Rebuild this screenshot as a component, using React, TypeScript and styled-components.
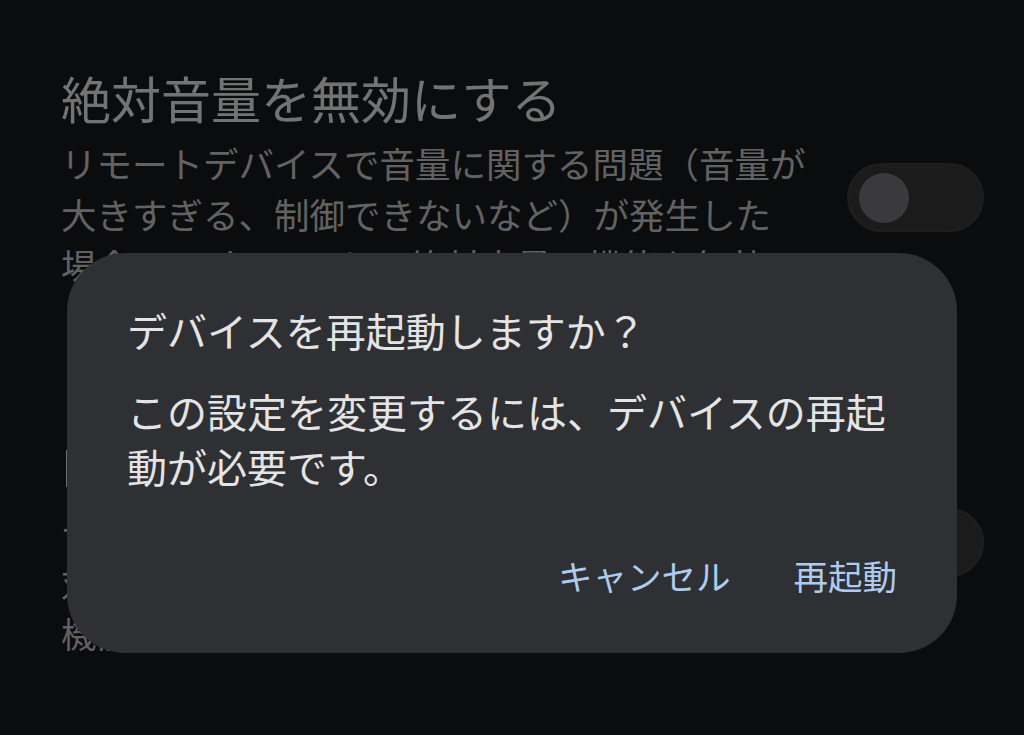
import React from "react"
import styled, { createGlobalStyle } from "styled-components"

const GlobalStyle = createGlobalStyle`
  html, body {
    margin: 0;
    padding: 0;
    background: #17181a;
  }
  body {
    font-family: "Noto Sans CJK JP", "Noto Sans", sans-serif;
    overflow: hidden;
  }
`

const Screen = styled.div`
  position: relative;
  width: 1024px;
  height: 735px;
  overflow: hidden;
  background: #17181a;
`

const SettingsList = styled.div`
  display: flex;
  flex-direction: column;
  gap: 91px;
  padding: 64px 40px 0 61px;
`

const SettingItem = styled.div`
  display: flex;
  align-items: center;
  gap: 40px;
`

const ItemText = styled.div`
  flex: 1;
  min-width: 0;
  display: flex;
  flex-direction: column;
  gap: 7px;
`

const ItemTitle = styled.div`
  font-size: 50px;
  line-height: 66px;
  color: #e6e6e6;
  white-space: nowrap;
`

const ItemDesc = styled.div`
  font-size: 35.5px;
  line-height: 51px;
  color: #c4c4c4;
`

const DescLine = styled.span`
  display: block;
  white-space: nowrap;
`

const Track = styled.div<{ $offsetY: number }>`
  flex: none;
  width: 137px;
  height: 69px;
  border-radius: 35px;
  background: #373737;
  box-sizing: border-box;
  border: 2px solid #3d3d3d;
  display: flex;
  align-items: center;
  padding-left: 10px;
  margin-top: ${p => p.$offsetY}px;
`

const Thumb = styled.div`
  width: 50px;
  height: 50px;
  border-radius: 50%;
  background: #747478;
`

const Scrim = styled.div`
  position: absolute;
  inset: 0;
  background: rgba(0, 0, 0, 0.5);
  display: flex;
  justify-content: center;
  align-items: flex-start;
  padding-top: 253px;
`

const Dialog = styled.div`
  width: 890px;
  box-sizing: border-box;
  background: #2f3033;
  border-radius: 58px;
  padding: 52px 44px 48px 60px;
  display: flex;
  flex-direction: column;
`

const DialogTitle = styled.div`
  font-size: 40px;
  line-height: 50px;
  color: #e4e4e6;
  padding-right: 16px;
`

const DialogBody = styled.div`
  margin-top: 29px;
  font-size: 40px;
  line-height: 55px;
  color: #e4e4e6;
  padding-right: 12px;
`

const Actions = styled.div`
  margin-top: 51px;
  display: flex;
  justify-content: flex-end;
  gap: 31px;
`

const TextButton = styled.button`
  height: 60px;
  padding: 0 16px;
  border: none;
  background: transparent;
  font-family: inherit;
  font-size: 34.5px;
  color: #aecbf0;
  cursor: pointer;
`

const items = [
  {
    title: "絶対音量を無効にする",
    lines: [
      "リモートデバイスで音量に関する問題（音量が",
      "大きすぎる、制御できないなど）が発生した",
      "場合に、Bluetooth の絶対音量の機能を無効に",
      "します。",
    ],
    offset: -10,
  },
  {
    title: "Bluetooth LE Audio を無効にする",
    lines: [
      "デバイスが LE Audio ハードウェアに",
      "対応している場合、LE Audio の",
      "機能を無効にします。",
    ],
    offset: -6,
  },
]

const Toggle = ({ offset }: { offset: number }) => (
  <Track $offsetY={offset}>
    <Thumb />
  </Track>
)

export default function App() {
  return (
    <>
      <GlobalStyle />
      <Screen>
        <SettingsList>
          {items.map(item => (
            <SettingItem key={item.title}>
              <ItemText>
                <ItemTitle>{item.title}</ItemTitle>
                <ItemDesc>
                  {item.lines.map(l => (
                    <DescLine key={l}>{l}</DescLine>
                  ))}
                </ItemDesc>
              </ItemText>
              <Toggle offset={item.offset} />
            </SettingItem>
          ))}
        </SettingsList>

        <Scrim>
          <Dialog role="dialog">
            <DialogTitle>デバイスを再起動しますか？</DialogTitle>
            <DialogBody>この設定を変更するには、デバイスの再起動が必要です。</DialogBody>
            <Actions>
              <TextButton>キャンセル</TextButton>
              <TextButton>再起動</TextButton>
            </Actions>
          </Dialog>
        </Scrim>
      </Screen>
    </>
  )
}
